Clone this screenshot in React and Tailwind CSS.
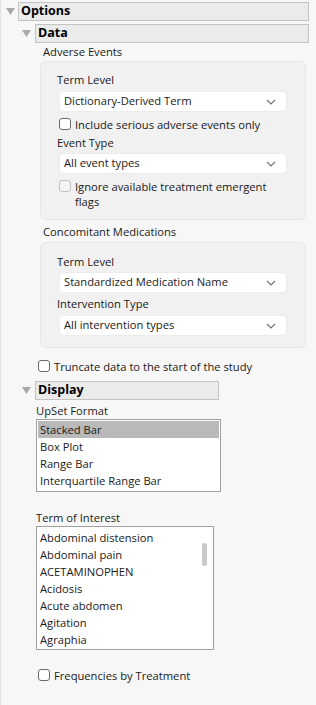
import React from 'react'

const font = { fontFamily: '"Open Sans", "Noto Sans", sans-serif' }

function Tri() {
  return (
    <svg width="9" height="7" viewBox="0 0 9 7" className="shrink-0">
      <path d="M0 0 H9 L4.5 7 Z" fill="#a8a8a8" />
    </svg>
  )
}

function Header({ label, indent, width }) {
  return (
    <div className="flex items-center h-[19px]">
      <div className={`${indent} flex items-center`}>
        <Tri />
      </div>
      <div className={`${width} h-[19px] border border-[#c3c3c3] bg-[#ebebeb] flex items-center pl-[2px] font-bold text-[12.5px] text-black`}>
        {label}
      </div>
    </div>
  )
}

function Chevron() {
  return (
    <svg width="10" height="6" viewBox="0 0 10 6" className="shrink-0">
      <path d="M1 1 L5 5 L9 1" fill="none" stroke="#707070" strokeWidth="1.1" />
    </svg>
  )
}

function Select({ value }) {
  return (
    <div className="ml-[2px] w-[228px] h-[21px] bg-white rounded-[4px] border border-[#ececec] flex items-center justify-between pl-[4px] pr-[10px] text-[11.2px] text-[#1a1a1a]">
      <span>{value}</span>
      <Chevron />
    </div>
  )
}

function Check({ label, disabled }) {
  return (
    <div className="flex items-start gap-[4px] text-[11.2px] leading-[15px] text-[#1a1a1a]">
      <div className={`mt-[1px] w-[12px] h-[12px] shrink-0 rounded-[3px] border ${disabled ? 'border-[#c2c2c2] bg-[#f4f4f4]' : 'border-[#6a6a6a] bg-white'}`} />
      <span>{label}</span>
    </div>
  )
}

function Label({ children, className = '' }) {
  return <div className={`h-[16px] leading-[16px] text-[11.2px] text-[#1a1a1a] ${className}`}>{children}</div>
}

const formats = ['Stacked Bar', 'Box Plot', 'Range Bar', 'Interquartile Range Bar']
const terms = ['Abdominal distension', 'Abdominal pain', 'ACETAMINOPHEN', 'Acidosis', 'Acute abdomen', 'Agitation', 'Agraphia']

export default function App() {
  return (
    <div style={font} className="w-[316px] h-[705px] bg-[#f7f7f7] border-l border-[#e2e2e2] overflow-hidden">
      <div className="pt-[2px]">
        <Header label="Options" indent="w-[17px] pl-[5px]" width="w-[291px]" />
        <div className="mt-[3px]">
          <Header label="Data" indent="w-[34px] pl-[21px]" width="w-[274px]" />
        </div>

        <div className="pl-[42px] mt-[1px]">
          <Label>Adverse Events</Label>
          <div className="ml-[-3px] mt-[1px] w-[266px] h-[159px] rounded-[6px] bg-[#f1f1f1] border border-[#e6e6e6] pl-[16px] pt-[10px]">
            <Label>Term Level</Label>
            <div className="mt-[3px]"><Select value="Dictionary-Derived Term" /></div>
            <div className="mt-[5px] ml-[2px]"><Check label="Include serious adverse events only" /></div>
            <Label className="mt-[3px]">Event Type</Label>
            <div className="mt-[2px]"><Select value="All event types" /></div>
            <div className="mt-[5px] ml-[2px] w-[226px]"><Check disabled label="Ignore available treatment emergent flags" /></div>
          </div>
          <Label className="mt-[4px]">Concomitant Medications</Label>
          <div className="ml-[-3px] mt-[2px] w-[266px] h-[106px] rounded-[6px] bg-[#f1f1f1] border border-[#e6e6e6] pl-[16px] pt-[11px]">
            <Label>Term Level</Label>
            <div className="mt-[2px]"><Select value="Standardized Medication Name" /></div>
            <Label className="mt-[3px]">Intervention Type</Label>
            <div className="mt-[3px]"><Select value="All intervention types" /></div>
          </div>
        </div>

        <div className="pl-[37px] mt-[11px]">
          <Check label="Truncate data to the start of the study" />
        </div>

        <div className="mt-[7px]">
          <Header label="Display" indent="w-[34px] pl-[21px]" width="w-[184px]" />
        </div>

        <div className="pl-[35px]">
          <Label className="mt-[3px]">UpSet Format</Label>
          <div className="mt-[0px] w-[185px] h-[73px] border border-[#a0a0a0] bg-white p-[1px] text-[11.2px] text-[#1a1a1a]">
            {formats.map((f, i) => (
              <div key={f} className={`h-[17px] leading-[17px] pl-[2px] ${i === 0 ? 'bg-[#b9b9b9]' : ''}`}>{f}</div>
            ))}
          </div>

          <Label className="mt-[18px]">Term of Interest</Label>
          <div className="relative w-[178px] h-[124px] border border-[#a0a0a0] bg-white pt-[2px] pl-[3px] text-[11.2px] text-[#1a1a1a]">
            {terms.map((t) => (
              <div key={t} className="h-[17px] leading-[17px]">{t}</div>
            ))}
            <div className="absolute right-[6px] top-[16px] w-[5px] h-[23px] rounded-full bg-[#cacaca]" />
          </div>

          <div className="mt-[18px] ml-[2px]">
            <Check label="Frequencies by Treatment" />
          </div>
        </div>
      </div>
    </div>
  )
}
